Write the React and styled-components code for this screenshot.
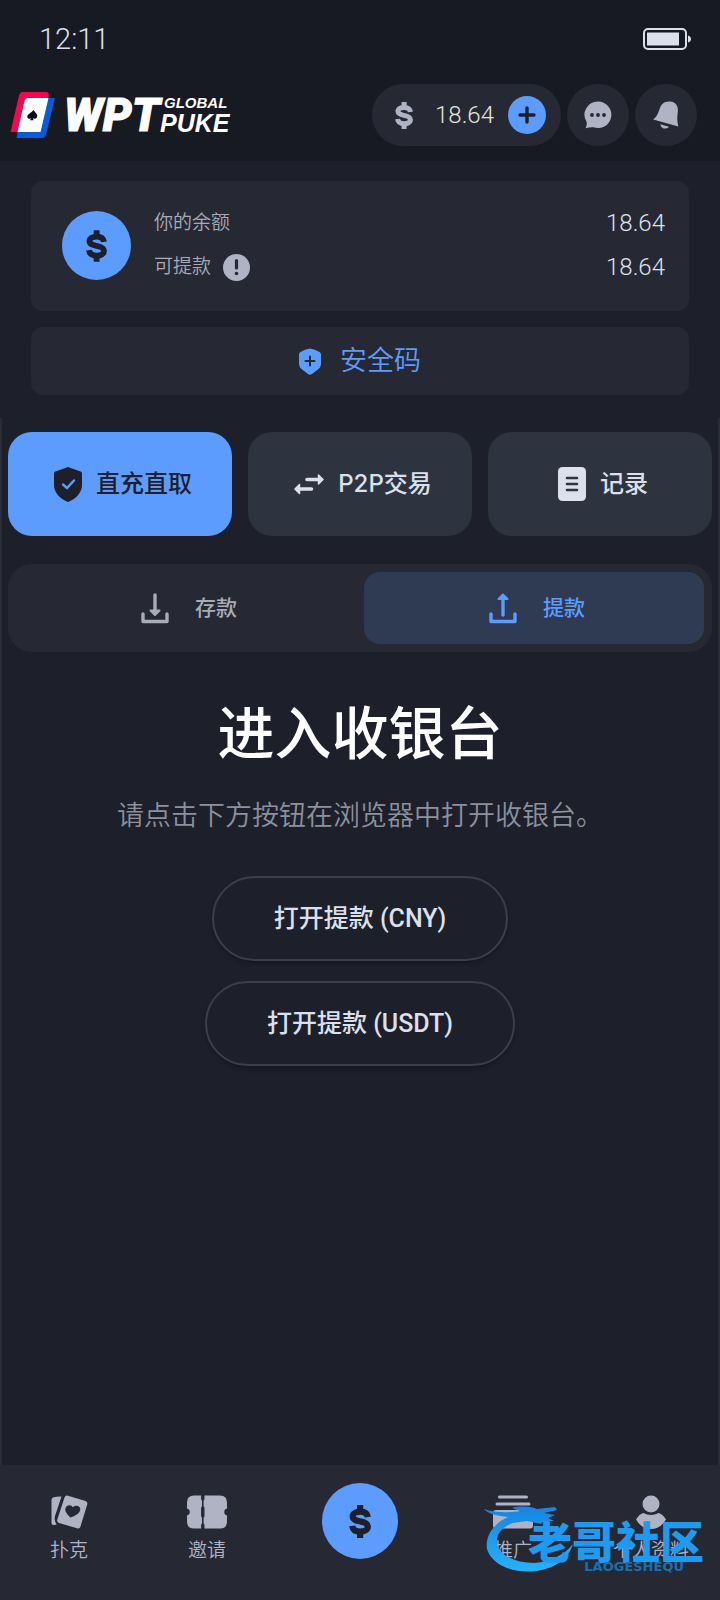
import { useState } from "react";
import styled, { createGlobalStyle } from "styled-components";

const GlobalStyle = createGlobalStyle`
:root{
    --main-color:#5c9cff;
    --page:#1d1f2b;
    --bar:#171923;
    --card:#262934;
    --button:#2e3340;
    --icon:#b0b3c3;
    --text:#dbe0ec;
    --muted:#a8abb8;
    --number-font:Roboto, sans-serif;
}
*{
    box-sizing:border-box;
}
body{
    margin:0;
    background-color:var(--page);
    color:var(--text);
    font-family:Inter, "Noto Sans CJK SC", sans-serif;
    line-height:1.2;
}
button{
    border:none;
    padding:0;
    color:inherit;
    font-family:inherit;
    line-height:inherit;
    cursor:pointer;
}
svg{
    display:block;
    flex-shrink:0;
}
`

const Page = styled.div`
position: relative;
min-height:100vh;
display: flex;
flex-direction: column;
`

////// top ---------------------------

const StatusBar = styled.div`
height:78px;
padding:0 28px 0 39px;
display: flex;
align-items: center;
justify-content: space-between;
background-color: var(--bar);
font-family:var(--number-font);
font-size:29px;
font-weight:300;
`

const Header = styled.header`
padding:6px 23px 15px 10px;
display: flex;
align-items: center;
justify-content: space-between;
background-color: var(--bar);
`

const Logo = styled.a`
display: flex;
align-items: center;
color:white;
text-decoration:none;
font-family:"Liberation Sans", sans-serif;
font-style:italic;
font-weight:700;
`

const LogoMain = styled.span`
margin-left:8px;
font-size:46px;
line-height:48px;
font-family:Roboto, sans-serif;
font-weight:900;
-webkit-text-stroke:1px white;
`

const LogoSide = styled.span`
display: flex;
flex-direction: column;
`

const LogoGlobal = styled.span`
padding-left:4px;
font-size:15px;
line-height:17px;
`

const LogoPuke = styled.span`
font-size:25px;
line-height:25px;
`

const HeaderActions = styled.div`
gap:6px;
display: flex;
align-items: center;
`

const BalancePill = styled.div`
height:62px;
padding:0 15px 0 23px;
display: flex;
align-items: center;
border-radius:31px;
background-color: var(--card);
color:var(--icon);
`

const PillValue = styled.span`
margin:0 14px 0 22px;
font-family:var(--number-font);
font-size:24px;
font-weight:300;
color:#e4e2dc;
`

const RoundButton = styled.button`
width:${({$size})=>$size}px;
height:${({$size})=>$size}px;
display: flex;
align-items: center;
justify-content: center;
border-radius:50%;
color:${({$filled})=>$filled ? "var(--page)" : "var(--icon)"};
background-color:${({$filled})=>$filled ? "var(--main-color)" : "var(--card)"};
`

////// balance ---------------------------

const Summary = styled.section`
gap:16px;
padding:20px 31px 23px;
display: flex;
flex-direction: column;
`

const BalanceCard = styled.div`
height:130px;
padding:30px 24px 0 31px;
gap:23px;
display: flex;
align-items: flex-start;
border-radius:12px;
background-color: var(--card);
`

const Coin = styled.div`
width:69px;
height:69px;
display: flex;
align-items: center;
justify-content: center;
border-radius:50%;
color:var(--page);
background-color: var(--main-color);
`

const BalanceRows = styled.div`
flex:1;
margin-top:-10px;
`

const BalanceRow = styled.div`
height:44px;
display: flex;
align-items: center;
justify-content: space-between;
`

const BalanceLabel = styled.span`
gap:12px;
display: flex;
align-items: center;
font-size:19px;
font-weight:350;
color:var(--muted);
`

const BalanceValue = styled.span`
font-family:var(--number-font);
font-size:24px;
font-weight:300;
`

const SecurityButton = styled.button`
height:68px;
gap:19px;
display: flex;
align-items: center;
justify-content: center;
border-radius:12px;
background-color: var(--card);
color:var(--main-color);
font-size:27px;
font-weight:350;
`

////// cashier ---------------------------

const Cashier = styled.main`
flex:1;
padding:14px 6px 40px;
border:2px solid #292c37;
border-top:none;
border-bottom:none;
`

const Methods = styled.div`
gap:16px;
display: grid;
grid-template-columns: repeat(3, 1fr);
`

const MethodButton = styled.button`
height:104px;
padding-left:6px;
gap:14px;
display: flex;
align-items: center;
justify-content: center;
border-radius:24px;
font-size:24px;
font-weight:500;
color:${({$active})=>$active ? "var(--page)" : "var(--text)"};
background-color:${({$active})=>$active ? "var(--main-color)" : "var(--button)"};
`

const Segment = styled.div`
margin-top:28px;
padding:8px;
gap:8px;
display: grid;
grid-template-columns: repeat(2, 1fr);
border-radius:24px;
background-color: var(--card);
`

const SegmentButton = styled.button`
height:72px;
padding-left:6px;
gap:26px;
display: flex;
align-items: center;
justify-content: center;
border-radius:16px;
font-size:21px;
font-weight:500;
color:${({$active})=>$active ? "var(--main-color)" : "var(--muted)"};
background-color:${({$active})=>$active ? "#2f3b53" : "transparent"};
`

const Title = styled.h1`
margin:50px 0 0;
font-size:57px;
line-height:64px;
font-weight:500;
text-align:center;
color:white;
`

const Hint = styled.p`
margin:32px 0 42px;
font-size:27px;
line-height:36px;
font-weight:350;
text-align:center;
color:#8d909e;
`

const OpenButtons = styled.div`
gap:20px;
display: flex;
flex-direction: column;
align-items: center;
`

const OpenButton = styled.button`
height:85px;
padding:0 60px;
border:2px solid #3b3f4c;
border-radius:43px;
background-color: var(--page);
box-shadow:0 3px 4px rgba(0,0,0,.25);
font-family:Roboto, "Noto Sans CJK SC", sans-serif;
font-size:25px;
font-weight:500;
`

////// bottom navigation ---------------------------

const BottomNav = styled.nav`
height:135px;
display: grid;
grid-template-columns: 1fr 1fr 168px 1fr 1fr;
background-color: var(--card);
`

const NavLink = styled.a`
padding-top:30px;
gap:8px;
display: flex;
flex-direction: column;
align-items: center;
color:var(--icon);
text-decoration:none;
font-size:19px;
line-height:28px;
font-weight:350;
`

const NavCenter = styled.div`
padding-top:18px;
display: flex;
justify-content: center;
`

const Stamp = styled.div`
position: absolute;
right:16px;
bottom:22px;
display: flex;
pointer-events: none;
color:#1e9bf0;
`

const StampText = styled.div`
margin-left:-50px;
padding-top:22px;
display: flex;
flex-direction: column;
align-items: flex-end;
`

const StampName = styled.span`
font-size:44px;
line-height:38px;
font-weight:900;
`

const StampLatin = styled.span`
padding-right:20px;
font-family:"DejaVu Sans", sans-serif;
font-size:13px;
line-height:10px;
font-weight:700;
color:#1b6fae;
`

////// icons ---------------------------

function DollarIcon({width = 18, height = 27}){
    return (
        <svg width={width} height={height} viewBox="0 0 18 27" fill="none" stroke="currentColor" strokeWidth="5">
            <path d="M15.400 10C15 6.800 12.400 5.400 9.200 5.400C5.800 5.400 3 6.800 3 9.300C3 12.200 6 12.800 9 13.400C12.400 14 15.400 14.800 15.400 17.800C15.400 20.400 12.600 21.700 9.200 21.700C5.400 21.700 3 20.200 2.600 17"/>
            <path d="M9.100 0V5M9.100 22V27"/>
        </svg>
    )
}

function BatteryIcon(){
    return (
        <svg width="49" height="22" viewBox="0 0 49 22">
            <rect x="1" y="1" width="42" height="20" rx="4" fill="none" stroke="#dbe0ec" strokeWidth="2"/>
            <rect x="4" y="4.500" width="32" height="13" fill="#dbe0ec"/>
            <path d="M45 7.500q3 1 3 3.500t-3 3.500z" fill="#dbe0ec"/>
        </svg>
    )
}

function CardLogo(){
    return (
        <svg width="46" height="46" viewBox="0 0 46 46">
            <path d="M12.500 0H36.500Q39.500 .5 38.600 4L29 40H.5L9 3.500Q10 0 12.500 0Z" fill="#f5064f"/>
            <path d="M16 6H45L36 42.500Q35 46 31.500 46H6.500L7.500 40Z" fill="#0a5bd8"/>
            <path d="M18 6H38.500L30.500 40H7.500L14.500 9Q15.500 6 18 6Z" fill="white"/>
            <path d="M23.500 18C26 21.500 28.300 22.800 26.800 25.600C25.800 27.200 24 27 23 26L23.600 28.300H19.800L21.500 26C20 27.400 17.600 26.800 17.300 25C17 22.500 20.500 21.500 23.500 18Z" fill="#0b0b12"/>
        </svg>
    )
}

function PlusIcon(){
    return (
        <svg width="18" height="18" viewBox="0 0 18 18" stroke="currentColor" strokeWidth="3.4" strokeLinecap="round">
            <path d="M9 2v14M2 9h14"/>
        </svg>
    )
}

function ChatIcon(){
    return (
        <svg width="28" height="28" viewBox="0 0 28 28">
            <path d="M14 .5a13.300 13.300 0 1 1-4.500 25.800Q6 26 1.600 27.200Q3.200 23.500 2.600 20.900A13.300 13.300 0 0 1 14 .5Z" fill="currentColor"/>
            <g fill="#262934"><circle cx="8" cy="14" r="1.900"/><circle cx="14" cy="14" r="1.900"/><circle cx="20" cy="14" r="1.900"/></g>
        </svg>
    )
}

function BellIcon(){
    return (
        <svg width="28" height="28" viewBox="0 0 28 28" fill="currentColor">
            <path d="M18 .6C24 1 26.500 5.500 25.800 10.500C25.300 15 24.800 18 26.300 25.400L1.200 18.500C5 15.500 6 12.500 7.600 8C9.200 3 12.500 .2 18 .6Z"/>
            <path d="M8.200 23.200L17 25.700Q14.500 28.200 11.600 27.400Q8.800 26.500 8.200 23.200Z"/>
        </svg>
    )
}

function InfoIcon(){
    return (
        <svg width="27" height="27" viewBox="0 0 27 27">
            <circle cx="13.500" cy="13.500" r="13.500" fill="#b0b3c3"/>
            <path d="M13.500 6.500V14" stroke="#262934" strokeWidth="3.200" strokeLinecap="round"/>
            <circle cx="13.500" cy="19.500" r="1.800" fill="#262934"/>
        </svg>
    )
}

function ShieldPlusIcon(){
    return (
        <svg width="22" height="27" viewBox="0 0 22 27">
            <path d="M11 .5Q16 1 20.500 4Q22 4.600 22 6.500V16Q22 19 19.500 21L13 26Q11 27.300 9 26L2.500 21Q0 19 0 16V6.500Q0 4.600 1.500 4Q6 1 11 .5Z" fill="currentColor"/>
            <path d="M11 8.500v9M6.500 13h9" stroke="#262934" strokeWidth="2" strokeLinecap="round"/>
        </svg>
    )
}

function ShieldCheckIcon(){
    return (
        <svg width="28" height="35" viewBox="0 0 28 35">
            <path d="M14 0L26.600 4.500Q28 5 28 6.600V18C28 26 21.500 32 14 35C6.500 32 0 26 0 18V6.600Q0 5 1.400 4.500Z" fill="currentColor"/>
            <path d="M9 17.500L13 21L20 13.500" fill="none" stroke="#5c9cff" strokeWidth="2.400" strokeLinecap="round"/>
        </svg>
    )
}

function SwapIcon(){
    return (
        <svg width="30" height="22" viewBox="0 0 30 22" fill="currentColor" stroke="currentColor" strokeLinejoin="round">
            <path d="M13 6.500H24M6 16H17.500" strokeWidth="3.600" strokeLinecap="round"/>
            <path d="M24.500 2L29 6.500L24.500 11ZM5.500 11.500L1 16L5.500 20.500Z" strokeWidth="1.500"/>
        </svg>
    )
}

function RecordIcon(){
    return (
        <svg width="28" height="34" viewBox="0 0 28 34">
            <rect width="28" height="34" rx="4.500" fill="currentColor"/>
            <path d="M9 11h10M9 17h10M9 23h10" stroke="#2e3340" strokeWidth="2.600" strokeLinecap="round"/>
        </svg>
    )
}

function TrayIcon({up}){
    return (
        <svg width="28" height="31" viewBox="0 0 28 31" fill="none" stroke="currentColor" strokeWidth="3.400">
            <path d="M2 21V28.500H26V21" strokeLinejoin="round" strokeLinecap="round"/>
            <path d={up ? "M14 4V22" : "M14 2V19"} strokeLinecap="round"/>
            <path d={up ? "M14 1.500L9.500 6H18.500Z" : "M14 22L9.500 17.500H18.500Z"} fill="currentColor" strokeWidth="2" strokeLinejoin="round"/>
        </svg>
    )
}

function CardsIcon(){
    return (
        <svg width="37" height="34" viewBox="0 0 37 34">
            <path d="M2 2.500Q6 1.300 10.500 1.500L4 21Q2.800 25 5.500 29.500Q0 31 .5 27V5Q.5 3 2 2.500Z" fill="currentColor"/>
            <path d="M17 .7L34.500 6Q37 7 36.200 9.500L29.500 31.500Q28.700 34 26 33.200L8 28Q5.500 27 6.300 24.500L13.500 2.500Q14.500 0 17 .7Z" fill="currentColor"/>
            <path d="M19.500 22.500C13 16.500 13.800 13.500 15.500 11.500C17.500 9.500 20.500 9.800 21.800 12.300C24.500 9.800 28.500 10.500 29.200 13.500C29.800 17.500 25.500 20.500 19.500 22.500Z" fill="#262934"/>
        </svg>
    )
}

function TicketIcon(){
    return (
        <svg width="40" height="34" viewBox="0 0 40 34">
            <path d="M7 .5H33Q40 .5 40 7.500V13.500A3.600 3.600 0 0 0 40 20.500V26.500Q40 33.500 33 33.500H7Q0 33.500 0 26.500V20.500A3.600 3.600 0 0 0 0 13.500V7.500Q0 .5 7 .5Z" fill="currentColor"/>
            <path d="M15.800 0V34" stroke="#262934" strokeWidth="1.600"/>
            <path d="M15.800 0V4M15.800 13V21M15.800 30V34" stroke="#262934" strokeWidth="3.400" strokeLinecap="round"/>
        </svg>
    )
}

function StackIcon(){
    return (
        <svg width="40" height="34" viewBox="0 0 40 34">
            <path d="M6.500 2H33.500M4 9H36" stroke="currentColor" strokeWidth="3" strokeLinecap="round"/>
            <rect y="15" width="40" height="18.500" rx="3" fill="currentColor"/>
        </svg>
    )
}

function UserIcon(){
    return (
        <svg width="30" height="34" viewBox="0 0 30 34" fill="currentColor">
            <circle cx="15" cy="9" r="8.500"/>
            <path d="M0 24.500Q3.500 18.800 7.500 18Q15 22 22.500 18Q26.500 18.800 30 24.500Q24.500 34 15 34T0 24.500Z"/>
        </svg>
    )
}

function DragonMark(){
    return (
        <svg width="94" height="76" viewBox="0 0 94 76">
            <defs>
                <linearGradient id="dragon" x1="0" y1="0" x2="0" y2="1">
                    <stop offset="0" stopColor="#1684e0"/>
                    <stop offset="1" stopColor="#26b2f7"/>
                </linearGradient>
            </defs>
            <path fill="url(#dragon)" d="M24 15C8 22 1 36 3 47C8 63 29 72 53 69C72 66 85 56 89 42C82 51 68 60 50 61C32 61 15 54 13 41C12 32 18 25 29 21L43 19C48 20 52 21 57 22C58 20 60 19 63 19L70 19L64 16L71 13L60 11L73 8L71 5L53 7C45 4 36 4 28 6L36 9C26 11 10 11 0 7C4 12 14 14 24 15Z"/>
        </svg>
    )
}

const METHODS = [
    {id:"direct", name:"直充直取", icon:<ShieldCheckIcon/>},
    {id:"p2p", name:"P2P交易", icon:<SwapIcon/>},
    {id:"records", name:"记录", icon:<RecordIcon/>},
];
const CURRENCIES = ["CNY","USDT"];

export default function App(){
    const [method, setMethod] = useState("direct");
    const [direction, setDirection] = useState("withdraw");

    return(
        <>
            <GlobalStyle/>
            <Page>
                <StatusBar>
                    <span>12:11</span>
                    <BatteryIcon/>
                </StatusBar>
                <Header>
                    <Logo href="#home">
                        <CardLogo/>
                        <LogoMain>WPT</LogoMain>
                        <LogoSide>
                            <LogoGlobal>GLOBAL</LogoGlobal>
                            <LogoPuke>PUKE</LogoPuke>
                        </LogoSide>
                    </Logo>
                    <HeaderActions>
                        <BalancePill>
                            <DollarIcon/>
                            <PillValue>18.64</PillValue>
                            <RoundButton $size={38} $filled aria-label="充值"><PlusIcon/></RoundButton>
                        </BalancePill>
                        <RoundButton $size={62} aria-label="消息"><ChatIcon/></RoundButton>
                        <RoundButton $size={62} aria-label="通知"><BellIcon/></RoundButton>
                    </HeaderActions>
                </Header>
                <Summary>
                    <BalanceCard>
                        <Coin><DollarIcon width={21} height={32}/></Coin>
                        <BalanceRows>
                            <BalanceRow>
                                <BalanceLabel>你的余额</BalanceLabel>
                                <BalanceValue>18.64</BalanceValue>
                            </BalanceRow>
                            <BalanceRow>
                                <BalanceLabel>可提款 <InfoIcon/></BalanceLabel>
                                <BalanceValue>18.64</BalanceValue>
                            </BalanceRow>
                        </BalanceRows>
                    </BalanceCard>
                    <SecurityButton><ShieldPlusIcon/>安全码</SecurityButton>
                </Summary>
                <Cashier>
                    <Methods>
                        {METHODS.map(({id,name,icon})=>(
                            <MethodButton key={id} $active={method === id} onClick={()=>setMethod(id)}>
                                {icon}{name}
                            </MethodButton>
                        ))}
                    </Methods>
                    <Segment>
                        <SegmentButton $active={direction === "deposit"} onClick={()=>setDirection("deposit")}>
                            <TrayIcon/>存款
                        </SegmentButton>
                        <SegmentButton $active={direction === "withdraw"} onClick={()=>setDirection("withdraw")}>
                            <TrayIcon up/>提款
                        </SegmentButton>
                    </Segment>
                    <Title>进入收银台</Title>
                    <Hint>请点击下方按钮在浏览器中打开收银台。</Hint>
                    <OpenButtons>
                        {CURRENCIES.map((currency)=>(
                            <OpenButton key={currency}>打开提款 ({currency})</OpenButton>
                        ))}
                    </OpenButtons>
                </Cashier>
                <BottomNav>
                    <NavLink href="#poker"><CardsIcon/>扑克</NavLink>
                    <NavLink href="#invite"><TicketIcon/>邀请</NavLink>
                    <NavCenter>
                        <RoundButton $size={76} $filled aria-label="收银台"><DollarIcon width={22} height={33}/></RoundButton>
                    </NavCenter>
                    <NavLink href="#promote"><StackIcon/>推广</NavLink>
                    <NavLink href="#profile"><UserIcon/>个人资料</NavLink>
                </BottomNav>
                <Stamp>
                    <DragonMark/>
                    <StampText>
                        <StampName>老哥社区</StampName>
                        <StampLatin>LAOGESHEQU</StampLatin>
                    </StampText>
                </Stamp>
            </Page>
        </>
    )
}
